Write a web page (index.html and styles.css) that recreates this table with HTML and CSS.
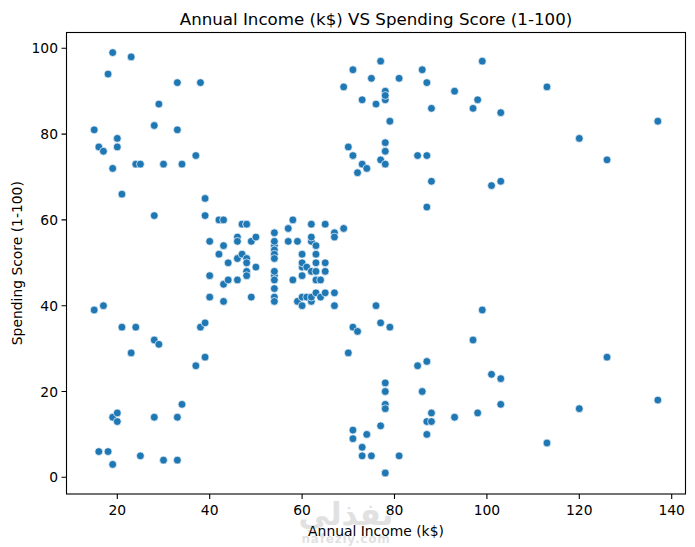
FILE: index.html
```html
<!DOCTYPE html>
<html lang="en">
<head>
<meta charset="utf-8">
<title>Annual Income (k$) VS Spending Score (1-100)</title>
<link rel="stylesheet" href="styles.css">
</head>
<body>
<figure class="figure">
<svg class="chart" width="695" height="547" viewBox="0 0 695 547" xmlns="http://www.w3.org/2000/svg">
  <text class="title" x="376" y="25">Annual Income (k$) VS Spending Score (1-100)</text>

  <g class="pts" transform="matrix(4.62 0 0 -4.29 24.9 477.3)">
    <ellipse cx="15" cy="39"/><ellipse cx="15" cy="81"/><ellipse cx="16" cy="6"/><ellipse cx="16" cy="77"/><ellipse cx="17" cy="40"/>
    <ellipse cx="17" cy="76"/><ellipse cx="18" cy="6"/><ellipse cx="18" cy="94"/><ellipse cx="19" cy="3"/><ellipse cx="19" cy="72"/>
    <ellipse cx="19" cy="14"/><ellipse cx="19" cy="99"/><ellipse cx="20" cy="15"/><ellipse cx="20" cy="77"/><ellipse cx="20" cy="13"/>
    <ellipse cx="20" cy="79"/><ellipse cx="21" cy="35"/><ellipse cx="21" cy="66"/><ellipse cx="23" cy="29"/><ellipse cx="23" cy="98"/>
    <ellipse cx="24" cy="35"/><ellipse cx="24" cy="73"/><ellipse cx="25" cy="5"/><ellipse cx="25" cy="73"/><ellipse cx="28" cy="14"/>
    <ellipse cx="28" cy="82"/><ellipse cx="28" cy="32"/><ellipse cx="28" cy="61"/><ellipse cx="29" cy="31"/><ellipse cx="29" cy="87"/>
    <ellipse cx="30" cy="4"/><ellipse cx="30" cy="73"/><ellipse cx="33" cy="4"/><ellipse cx="33" cy="92"/><ellipse cx="33" cy="14"/>
    <ellipse cx="33" cy="81"/><ellipse cx="34" cy="17"/><ellipse cx="34" cy="73"/><ellipse cx="37" cy="26"/><ellipse cx="37" cy="75"/>
    <ellipse cx="38" cy="35"/><ellipse cx="38" cy="92"/><ellipse cx="39" cy="36"/><ellipse cx="39" cy="61"/><ellipse cx="39" cy="28"/>
    <ellipse cx="39" cy="65"/><ellipse cx="40" cy="55"/><ellipse cx="40" cy="47"/><ellipse cx="40" cy="42"/><ellipse cx="40" cy="42"/>
    <ellipse cx="42" cy="52"/><ellipse cx="42" cy="60"/><ellipse cx="43" cy="54"/><ellipse cx="43" cy="60"/><ellipse cx="43" cy="45"/>
    <ellipse cx="43" cy="41"/><ellipse cx="44" cy="50"/><ellipse cx="44" cy="46"/><ellipse cx="46" cy="51"/><ellipse cx="46" cy="46"/>
    <ellipse cx="46" cy="56"/><ellipse cx="46" cy="55"/><ellipse cx="47" cy="52"/><ellipse cx="47" cy="59"/><ellipse cx="48" cy="51"/>
    <ellipse cx="48" cy="59"/><ellipse cx="48" cy="50"/><ellipse cx="48" cy="48"/><ellipse cx="48" cy="59"/><ellipse cx="48" cy="47"/>
    <ellipse cx="49" cy="55"/><ellipse cx="49" cy="42"/><ellipse cx="50" cy="49"/><ellipse cx="50" cy="56"/><ellipse cx="54" cy="47"/>
    <ellipse cx="54" cy="54"/><ellipse cx="54" cy="53"/><ellipse cx="54" cy="48"/><ellipse cx="54" cy="52"/><ellipse cx="54" cy="42"/>
    <ellipse cx="54" cy="51"/><ellipse cx="54" cy="55"/><ellipse cx="54" cy="41"/><ellipse cx="54" cy="44"/><ellipse cx="54" cy="57"/>
    <ellipse cx="54" cy="46"/><ellipse cx="57" cy="58"/><ellipse cx="57" cy="55"/><ellipse cx="58" cy="60"/><ellipse cx="58" cy="46"/>
    <ellipse cx="59" cy="55"/><ellipse cx="59" cy="41"/><ellipse cx="60" cy="49"/><ellipse cx="60" cy="40"/><ellipse cx="60" cy="42"/>
    <ellipse cx="60" cy="52"/><ellipse cx="60" cy="47"/><ellipse cx="60" cy="50"/><ellipse cx="61" cy="42"/><ellipse cx="61" cy="49"/>
    <ellipse cx="62" cy="41"/><ellipse cx="62" cy="48"/><ellipse cx="62" cy="59"/><ellipse cx="62" cy="55"/><ellipse cx="62" cy="56"/>
    <ellipse cx="62" cy="42"/><ellipse cx="63" cy="50"/><ellipse cx="63" cy="46"/><ellipse cx="63" cy="43"/><ellipse cx="63" cy="48"/>
    <ellipse cx="63" cy="52"/><ellipse cx="63" cy="54"/><ellipse cx="64" cy="42"/><ellipse cx="64" cy="46"/><ellipse cx="65" cy="48"/>
    <ellipse cx="65" cy="50"/><ellipse cx="65" cy="43"/><ellipse cx="65" cy="59"/><ellipse cx="67" cy="43"/><ellipse cx="67" cy="57"/>
    <ellipse cx="67" cy="56"/><ellipse cx="67" cy="40"/><ellipse cx="69" cy="58"/><ellipse cx="69" cy="91"/><ellipse cx="70" cy="29"/>
    <ellipse cx="70" cy="77"/><ellipse cx="71" cy="35"/><ellipse cx="71" cy="95"/><ellipse cx="71" cy="11"/><ellipse cx="71" cy="75"/>
    <ellipse cx="71" cy="9"/><ellipse cx="71" cy="75"/><ellipse cx="72" cy="34"/><ellipse cx="72" cy="71"/><ellipse cx="73" cy="5"/>
    <ellipse cx="73" cy="88"/><ellipse cx="73" cy="7"/><ellipse cx="73" cy="73"/><ellipse cx="74" cy="10"/><ellipse cx="74" cy="72"/>
    <ellipse cx="75" cy="5"/><ellipse cx="75" cy="93"/><ellipse cx="76" cy="40"/><ellipse cx="76" cy="87"/><ellipse cx="77" cy="12"/>
    <ellipse cx="77" cy="97"/><ellipse cx="77" cy="36"/><ellipse cx="77" cy="74"/><ellipse cx="78" cy="22"/><ellipse cx="78" cy="90"/>
    <ellipse cx="78" cy="17"/><ellipse cx="78" cy="88"/><ellipse cx="78" cy="20"/><ellipse cx="78" cy="76"/><ellipse cx="78" cy="16"/>
    <ellipse cx="78" cy="89"/><ellipse cx="78" cy="1"/><ellipse cx="78" cy="78"/><ellipse cx="78" cy="1"/><ellipse cx="78" cy="73"/>
    <ellipse cx="79" cy="35"/><ellipse cx="79" cy="83"/><ellipse cx="81" cy="5"/><ellipse cx="81" cy="93"/><ellipse cx="85" cy="26"/>
    <ellipse cx="85" cy="75"/><ellipse cx="86" cy="20"/><ellipse cx="86" cy="95"/><ellipse cx="87" cy="27"/><ellipse cx="87" cy="63"/>
    <ellipse cx="87" cy="13"/><ellipse cx="87" cy="75"/><ellipse cx="87" cy="10"/><ellipse cx="87" cy="92"/><ellipse cx="88" cy="13"/>
    <ellipse cx="88" cy="86"/><ellipse cx="88" cy="15"/><ellipse cx="88" cy="69"/><ellipse cx="93" cy="14"/><ellipse cx="93" cy="90"/>
    <ellipse cx="97" cy="32"/><ellipse cx="97" cy="86"/><ellipse cx="98" cy="15"/><ellipse cx="98" cy="88"/><ellipse cx="99" cy="39"/>
    <ellipse cx="99" cy="97"/><ellipse cx="101" cy="24"/><ellipse cx="101" cy="68"/><ellipse cx="103" cy="17"/><ellipse cx="103" cy="85"/>
    <ellipse cx="103" cy="23"/><ellipse cx="103" cy="69"/><ellipse cx="113" cy="8"/><ellipse cx="113" cy="91"/><ellipse cx="120" cy="16"/>
    <ellipse cx="120" cy="79"/><ellipse cx="126" cy="28"/><ellipse cx="126" cy="74"/><ellipse cx="137" cy="18"/><ellipse cx="137" cy="83"/>
  </g>

  <rect class="frame" x="66.5" y="32.5" width="619" height="461.5"/>

  <g class="ticks">
    <path d="M117.3 494v5M209.7 494v5M302.1 494v5M394.5 494v5M486.9 494v5M579.3 494v5M671.7 494v5"/>
    <path d="M66.5 477.3h-5M66.5 391.5h-5M66.5 305.7h-5M66.5 219.9h-5M66.5 134.1h-5M66.5 48.3h-5"/>
  </g>

  <g class="watermark">
    <text class="wm-ar" x="346" y="525">نفذلي</text>
    <text class="wm-en" x="346" y="543">nafezly.com</text>
  </g>

  <g class="xticklabels">
    <text x="117.3" y="515">20</text><text x="209.7" y="515">40</text><text x="302.1" y="515">60</text>
    <text x="394.5" y="515">80</text><text x="486.9" y="515">100</text><text x="579.3" y="515">120</text>
    <text x="671.7" y="515">140</text>
  </g>
  <g class="yticklabels">
    <text x="58" y="482.4">0</text><text x="58" y="396.6">20</text><text x="58" y="310.8">40</text>
    <text x="58" y="225">60</text><text x="58" y="139.2">80</text><text x="58" y="53.4">100</text>
  </g>

  <text class="xlabel" x="376" y="535.5">Annual Income (k$)</text>
  <text class="ylabel" transform="translate(21.8 263.2) rotate(-90)">Spending Score (1-100)</text>
</svg>
</figure>
</body>
</html>
```

FILE: styles.css
```css
html, body {
  margin: 0;
  padding: 0;
  background: #ffffff;
}
.figure {
  margin: 0;
  width: 695px;
  height: 547px;
  overflow: hidden;
}
.chart {
  display: block;
  font-family: "DejaVu Sans", "Liberation Sans", sans-serif;
}
.title {
  font-size: 16.67px;
  text-anchor: middle;
  fill: #000;
}
.pts ellipse {
  rx: 0.844px;
  ry: 0.909px;
  fill: #1f77b4;
  stroke: #ffffff;
  stroke-width: 0.67px;
  vector-effect: non-scaling-stroke;
}
.frame {
  fill: none;
  stroke: #000;
  stroke-width: 1.1px;
}
.ticks path {
  fill: none;
  stroke: #000;
  stroke-width: 1.1px;
}
.xticklabels text {
  font-size: 13.89px;
  text-anchor: middle;
  fill: #000;
}
.yticklabels text {
  font-size: 13.89px;
  text-anchor: end;
  fill: #000;
}
.xlabel, .ylabel {
  font-size: 13.89px;
  text-anchor: middle;
  fill: #000;
}
.watermark text {
  text-anchor: middle;
  fill: #d9d9d9;
  fill-opacity: 0.8;
}
.wm-ar {
  font-family: "DejaVu Sans", sans-serif;
  font-weight: bold;
  font-size: 31px;
}
.wm-en {
  font-family: "DejaVu Sans", sans-serif;
  font-weight: bold;
  font-size: 12px;
  letter-spacing: 0.8px;
}
```
